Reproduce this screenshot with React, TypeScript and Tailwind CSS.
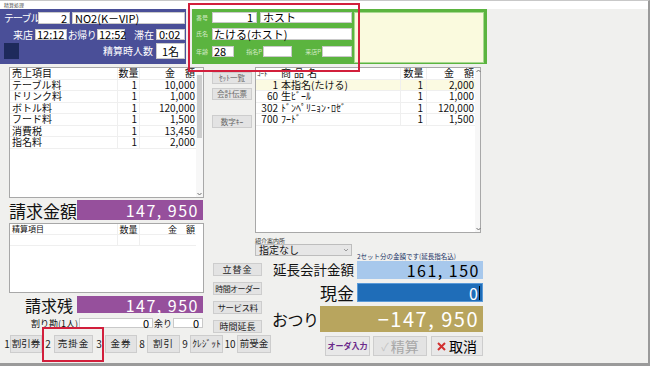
import React from "react";

const SALES = [
  ["テーブル料", "1", "10,000"],
  ["ドリンク料", "1", "1,000"],
  ["ボトル料", "1", "120,000"],
  ["フード料", "1", "1,500"],
  ["消費税", "1", "13,450"],
  ["指名料", "1", "2,000"],
];

const ORDERS: [string, string, string, string, boolean][] = [
  ["1", "本指名(たける)", "1", "2,000", true],
  ["60", "生ﾋﾞｰﾙ", "1", "1,000", false],
  ["302", "ﾄﾞﾝﾍﾟﾘﾆｮﾝ･ﾛｾﾞ", "1", "120,000", false],
  ["700", "ﾌｰﾄﾞ", "1", "1,500", false],
];

function Field({ className = "", children }: { className?: string; children?: React.ReactNode }) {
  return (
    <div className={`flex h-full items-center border border-[#c9c9c9] bg-white text-[11px] text-black ${className}`}>
      {children}
    </div>
  );
}

function GLabel({ children, className = "w-[20px]" }: { children: React.ReactNode; className?: string }) {
  return <span className={`text-center text-[6px] text-[#d3ebc6] ${className}`}>{children}</span>;
}

function Scroll({ thumb, w = "w-[7px]" }: { thumb?: boolean; w?: string }) {
  return (
    <div className={`flex flex-col bg-[#f7f7f7] ${w}`}>
      <svg width="7" height="6" viewBox="0 0 7 6">
        <path d="M1.5 4L3.5 2L5.5 4" fill="none" stroke="#707070" strokeWidth="1" />
      </svg>
      <div className="flex-1 px-[1px] pt-[1px]">{thumb && <div className="h-[63px] bg-[#cdcdcd]" />}</div>
      <svg width="7" height="6" viewBox="0 0 7 6">
        <path d="M1.5 2L3.5 4L5.5 2" fill="none" stroke="#707070" strokeWidth="1" />
      </svg>
    </div>
  );
}

function Btn({ className = "", children }: { className?: string; children: React.ReactNode }) {
  return (
    <div className={`flex items-center justify-center overflow-hidden border border-[#cdcdcd] bg-[#e3e3e3] ${className}`}>
      {children}
    </div>
  );
}

function Num({ className, children }: { className: string; children: React.ReactNode }) {
  return <span className={`flex items-center justify-center text-[10px] text-[#222] ${className}`}>{children}</span>;
}

export default function App() {
  return (
    <div className="relative flex h-[366px] w-[650px] flex-col overflow-hidden border-t border-r-2 border-b-[3px] border-[#9a9a9a] border-t-[#c8c8c8] bg-[#f0f0ee] font-['Noto_Sans_CJK_JP','Noto_Sans',sans-serif] leading-none whitespace-nowrap text-[#111]">
      <div className="h-[8px] bg-white pl-[4px] text-[5px] leading-[8px] text-[#555]">精算処理</div>

      {/* top row */}
      <div className="flex h-[55px]">
        <div className="flex w-[186px] flex-col bg-[#4a4f98]">
          <div className="mt-[3px] flex h-[12px] items-center">
            <span className="w-[38px] pl-[4px] text-[10px] tracking-[-1px] text-white">テーブル</span>
            <Field className="w-[32px] justify-end pr-[2px]">2</Field>
            <Field className="ml-[2px] w-[113px] pl-[2px]">NO2(K－VIP)</Field>
          </div>
          <div className="mt-[5px] flex h-[11px] items-center text-[10px] text-white">
            <span className="w-[35px] pr-[2px] text-right">来店</span>
            <Field className="w-[32px] pl-[1px] text-[10px]">12:12</Field>
            <span className="w-[30px] text-center tracking-[-0.5px]">お帰り</span>
            <Field className="w-[28px] pl-[1px] text-[10px]">12:52</Field>
            <span className="w-[31px] pr-[2px] text-right">滞在</span>
            <Field className="w-[29px] pl-[2px] text-[10px]">0:02</Field>
          </div>
          <div className="mt-[3px] flex h-[16px] items-center">
            <div className="ml-[4px] h-[16px] w-[15px] bg-[#1e2a5c]" />
            <span className="flex-1 pr-[3px] text-right text-[10px] text-white">精算時人数</span>
            <Field className="mr-[1px] h-[12px] w-[29px] justify-center text-[10px]">1名</Field>
          </div>
        </div>

        <div className="ml-[6px] flex w-[295px] bg-[#5bb43f]">
          <div className="flex w-[162px] flex-col">
            <div className="mt-[3px] flex h-[11px] items-center">
              <GLabel>番号</GLabel>
              <Field className="w-[45px] justify-end pr-[3px] text-[10px]">1</Field>
              <Field className="ml-[3px] w-[92px] pl-[2px] text-[10px]">ホスト</Field>
            </div>
            <div className="mt-[5px] flex h-[12px] items-center">
              <GLabel>氏名</GLabel>
              <Field className="w-[140px] pl-[1px] text-[10px] text-[#2a4fc0]">たける(ホスト)</Field>
            </div>
            <div className="mt-[6px] flex h-[11px] items-center">
              <GLabel>年齢</GLabel>
              <Field className="w-[22px] pl-[1px] text-[10px]">28</Field>
              <GLabel className="w-[29px] pr-[1px] text-right">指名P</GLabel>
              <Field className="w-[29px]" />
              <GLabel className="w-[30px] pr-[1px] text-right">来店P</GLabel>
              <Field className="w-[30px]" />
            </div>
          </div>
          <div className="mt-[3px] mr-[3px] mb-[1px] flex-1 border border-[#a8d890] bg-[#fafade]" />
        </div>
      </div>

      {/* body */}
      <div className="flex h-[269px]">
        {/* left column */}
        <div className="flex w-[205px] flex-col pl-[9px]">
          <div className="mt-[3px] flex h-[131px] w-[195px] border border-[#a8a8a8] bg-white">
            <div className="flex flex-1 flex-col text-[10px]">
              <div className="flex h-[11.5px] items-center border-b border-[#efefef]">
                <div className="w-[107px] pl-[2px]">売上項目</div>
                <div className="flex h-full w-[23px] items-center justify-center border-l border-r border-[#efefef]">数量</div>
                <div className="flex-1 pr-[1px] text-right">金　額</div>
              </div>
              {SALES.map((r) => (
                <div key={r[0]} className="flex h-[11.5px] items-center border-b border-[#efefef]">
                  <div className="w-[107px] pl-[2px]">{r[0]}</div>
                  <div className="flex h-full w-[23px] items-center justify-end border-l border-r border-[#efefef] pr-[2px]">{r[1]}</div>
                  <div className="flex-1 pr-[1px] text-right">{r[2]}</div>
                </div>
              ))}
            </div>
            <Scroll thumb />
          </div>

          <div className="mt-[2px] flex h-[20px] items-center">
            <span className="w-[68px] text-[17px]">請求金額</span>
            <div className="flex h-full w-[126px] items-center justify-end bg-[#96509c] pr-[4px] text-[16px] tracking-[1.5px] text-white">
              147, 950
            </div>
          </div>

          <div className="mt-[3px] flex h-[70px] w-[195px] border border-[#a8a8a8] bg-white">
            <div className="flex flex-1 flex-col text-[8px]">
              <div className="flex h-[11px] items-center border-b border-[#efefef]">
                <div className="w-[107px] pl-[2px]">精算項目</div>
                <div className="flex h-full w-[23px] items-center justify-center border-l border-r border-[#efefef] text-[9px]">数量</div>
                <div className="flex-1 pr-[1px] text-right text-[9px]">金　額</div>
              </div>
              <div className="flex h-[11px] border-b border-[#efefef]">
                <div className="w-[107px]" />
                <div className="w-[23px] border-l border-r border-[#efefef]" />
              </div>
            </div>
            <div className="w-[7px]" />
          </div>

          <div className="mt-[3px] flex h-[17px] items-center">
            <span className="w-[68px] pr-[4px] text-right text-[16px]">請求残</span>
            <div className="flex h-full w-[126px] items-center justify-end bg-[#96509c] pr-[4px] text-[16px] tracking-[1.5px] text-white">
              147, 950
            </div>
          </div>

          <div className="mt-[5px] flex h-[10px] items-center text-[9px]">
            <span className="w-[70px] pr-[1px] text-right">割り勘(1人)</span>
            <Field className="w-[74px] justify-end pr-[3px] text-[9px]">0</Field>
            <span className="w-[20px] text-center">余り</span>
            <Field className="w-[30px] justify-end pr-[3px] text-[9px]">0</Field>
          </div>
        </div>

        {/* right area */}
        <div className="flex w-[278px] flex-col">
          <div className="mt-[3px] flex h-[166px]">
            <div className="flex w-[50px] flex-col pl-[7px] text-[7.5px] text-[#666]">
              <Btn className="mt-[5px] h-[12px] w-[40px]">ｾｯﾄ一覧</Btn>
              <Btn className="mt-[4px] h-[12px] w-[40px]">会計伝票</Btn>
              <Btn className="mt-[15px] h-[13px] w-[40px]">数字ｷｰ</Btn>
            </div>
            <div className="flex h-full w-[226px] border border-[#a8a8a8] bg-white">
              <div className="flex flex-1 flex-col text-[10px]">
                <div className="flex h-[11.5px] items-center border-b border-[#efefef]">
                  <div className="w-[23px] pl-[1px] text-[7px]">ｺｰﾄﾞ</div>
                  <div className="w-[121px] pl-[2px] tracking-[3px]">商品名</div>
                  <div className="flex h-full w-[27px] items-center justify-center border-l border-r border-[#efefef]">数量</div>
                  <div className="flex-1 pr-[1px] text-right">金　額</div>
                </div>
                {ORDERS.map((r) => (
                  <div key={r[0]} className={`flex h-[11.5px] items-center border-b border-[#efefef] ${r[4] ? "bg-[#fbfae2]" : ""}`}>
                    <div className="w-[23px] pr-[1px] text-right">{r[0]}</div>
                    <div className="w-[121px] pl-[2px]">{r[1]}</div>
                    <div className="flex h-full w-[27px] items-center justify-end border-l border-r border-[#efefef] pr-[3px]">{r[2]}</div>
                    <div className="flex-1 pr-[1px] text-right">{r[3]}</div>
                  </div>
                ))}
              </div>
              <Scroll w="w-[5px]" />
            </div>
          </div>

          <div className="mt-[5px] flex h-[22px] items-end pl-[50px]">
            <div className="mb-[4px] flex w-[97px] flex-col">
              <span className="h-[6px] text-[6px] text-[#333]">紹介案内所</span>
              <div className="flex h-[12px] items-center justify-between border border-[#bdbdbd] bg-[#e6e6e6] pr-[2px] pl-[3px] text-[10px]">
                指定なし
                <svg width="6" height="4" viewBox="0 0 6 4">
                  <path d="M1 1L3 3L5 1" fill="none" stroke="#888" strokeWidth="0.8" />
                </svg>
              </div>
            </div>
            <span className="ml-[5px] text-[6.5px] leading-[7px] text-[#223366]">2セット分の金額です(延長指名込)</span>
          </div>

          <div className="mt-[1px] flex h-[72px]">
            <div className="flex w-[57px] flex-col gap-[6px] pt-[2px] pl-[8px] text-[9px] text-[#222]">
              <Btn className="h-[13px] w-[49px] tracking-[1px]">立替金</Btn>
              <Btn className="h-[13px] w-[49px] text-[8px] tracking-[-0.6px]">時間オーダー</Btn>
              <Btn className="h-[13px] w-[49px] text-[8.5px] tracking-[-0.5px]">サービス料</Btn>
              <Btn className="h-[13px] w-[49px]">時間延長</Btn>
            </div>
            <div className="flex flex-1 flex-col">
              <div className="flex h-[18px] items-center">
                <span className="w-[95px] pr-[3px] text-right text-[13.5px]">延長会計金額</span>
                <div className="flex h-full w-[126px] items-center justify-end bg-[#a7c8ec] pr-[3px] text-[16px] tracking-[1.5px] text-black">
                  161, 150
                </div>
              </div>
              <div className="mt-[4px] flex h-[19px] items-center">
                <span className="w-[95px] pr-[3px] text-right text-[17px]">現金</span>
                <div className="flex h-full w-[126px] items-center justify-end border border-[#5a9ad8] bg-[#1f6db8] pr-[2px] text-[16px] text-white">
                  0<div className="ml-[1px] h-[14px] w-[1px] bg-black" />
                </div>
              </div>
              <div className="mt-[4px] flex h-[26px] items-center">
                <span className="w-[58px] pl-[10px] text-[16px] tracking-[-0.5px]">おつり</span>
                <div className="flex h-full w-[163px] items-center justify-end bg-[#b8a55e] pr-[4px] text-[20px] tracking-[1.5px] text-white">
                  −147, 950
                </div>
              </div>
            </div>
          </div>
        </div>
      </div>

      {/* bottom buttons */}
      <div className="mt-[2px] flex h-[20px] items-start pl-[4px] text-[9.5px] text-[#222]">
        <Num className="h-[18px] w-[6px]">1</Num>
        <Btn className="h-[18px] w-[32px]">割引券</Btn>
        <Num className="h-[18px] w-[12px]">2</Num>
        <Btn className="h-[18px] w-[39px] tracking-[1px]">売掛金</Btn>
        <Num className="h-[18px] w-[12px]">3</Num>
        <Btn className="h-[18px] w-[32px] tracking-[1px]">金券</Btn>
        <Num className="h-[18px] w-[10px]">8</Num>
        <Btn className="h-[18px] w-[33px] tracking-[1px]">割引</Btn>
        <Num className="h-[18px] w-[10px]">9</Num>
        <Btn className="h-[18px] w-[33px]">ｸﾚｼﾞｯﾄ</Btn>
        <Num className="h-[18px] w-[14px]">10</Num>
        <Btn className="h-[18px] w-[34px]">前受金</Btn>
        <Btn className="mt-[1px] ml-[54px] h-[20px] w-[45px] bg-[#e8e8e8] text-[8px] font-bold text-[#6b2a8a]">オーダ入力</Btn>
        <Btn className="mt-[1px] ml-[3px] h-[20px] w-[54px] gap-[2px] bg-[#dcdcdc] text-[14px] text-[#a8a8a8]">
          <span className="text-[11px] text-[#c4c4c4]">✓</span>精算
        </Btn>
        <Btn className="mt-[1px] ml-[4px] h-[20px] w-[52px] gap-[3px] bg-[#e8e8e8] text-[14px] text-black">
          <svg width="9" height="9" viewBox="0 0 9 9">
            <path d="M1 1L8 8M8 1L1 8" stroke="#d23030" strokeWidth="2" />
          </svg>
          取消
        </Btn>
      </div>

      {/* red highlight frames */}
      <div className="absolute top-[2px] left-[188px] h-[69px] w-[172px] border-2 border-[#d21f3c]" />
      <div className="absolute top-[326px] left-[42px] h-[35px] w-[62px] border-2 border-[#d21f3c]" />
    </div>
  );
}
